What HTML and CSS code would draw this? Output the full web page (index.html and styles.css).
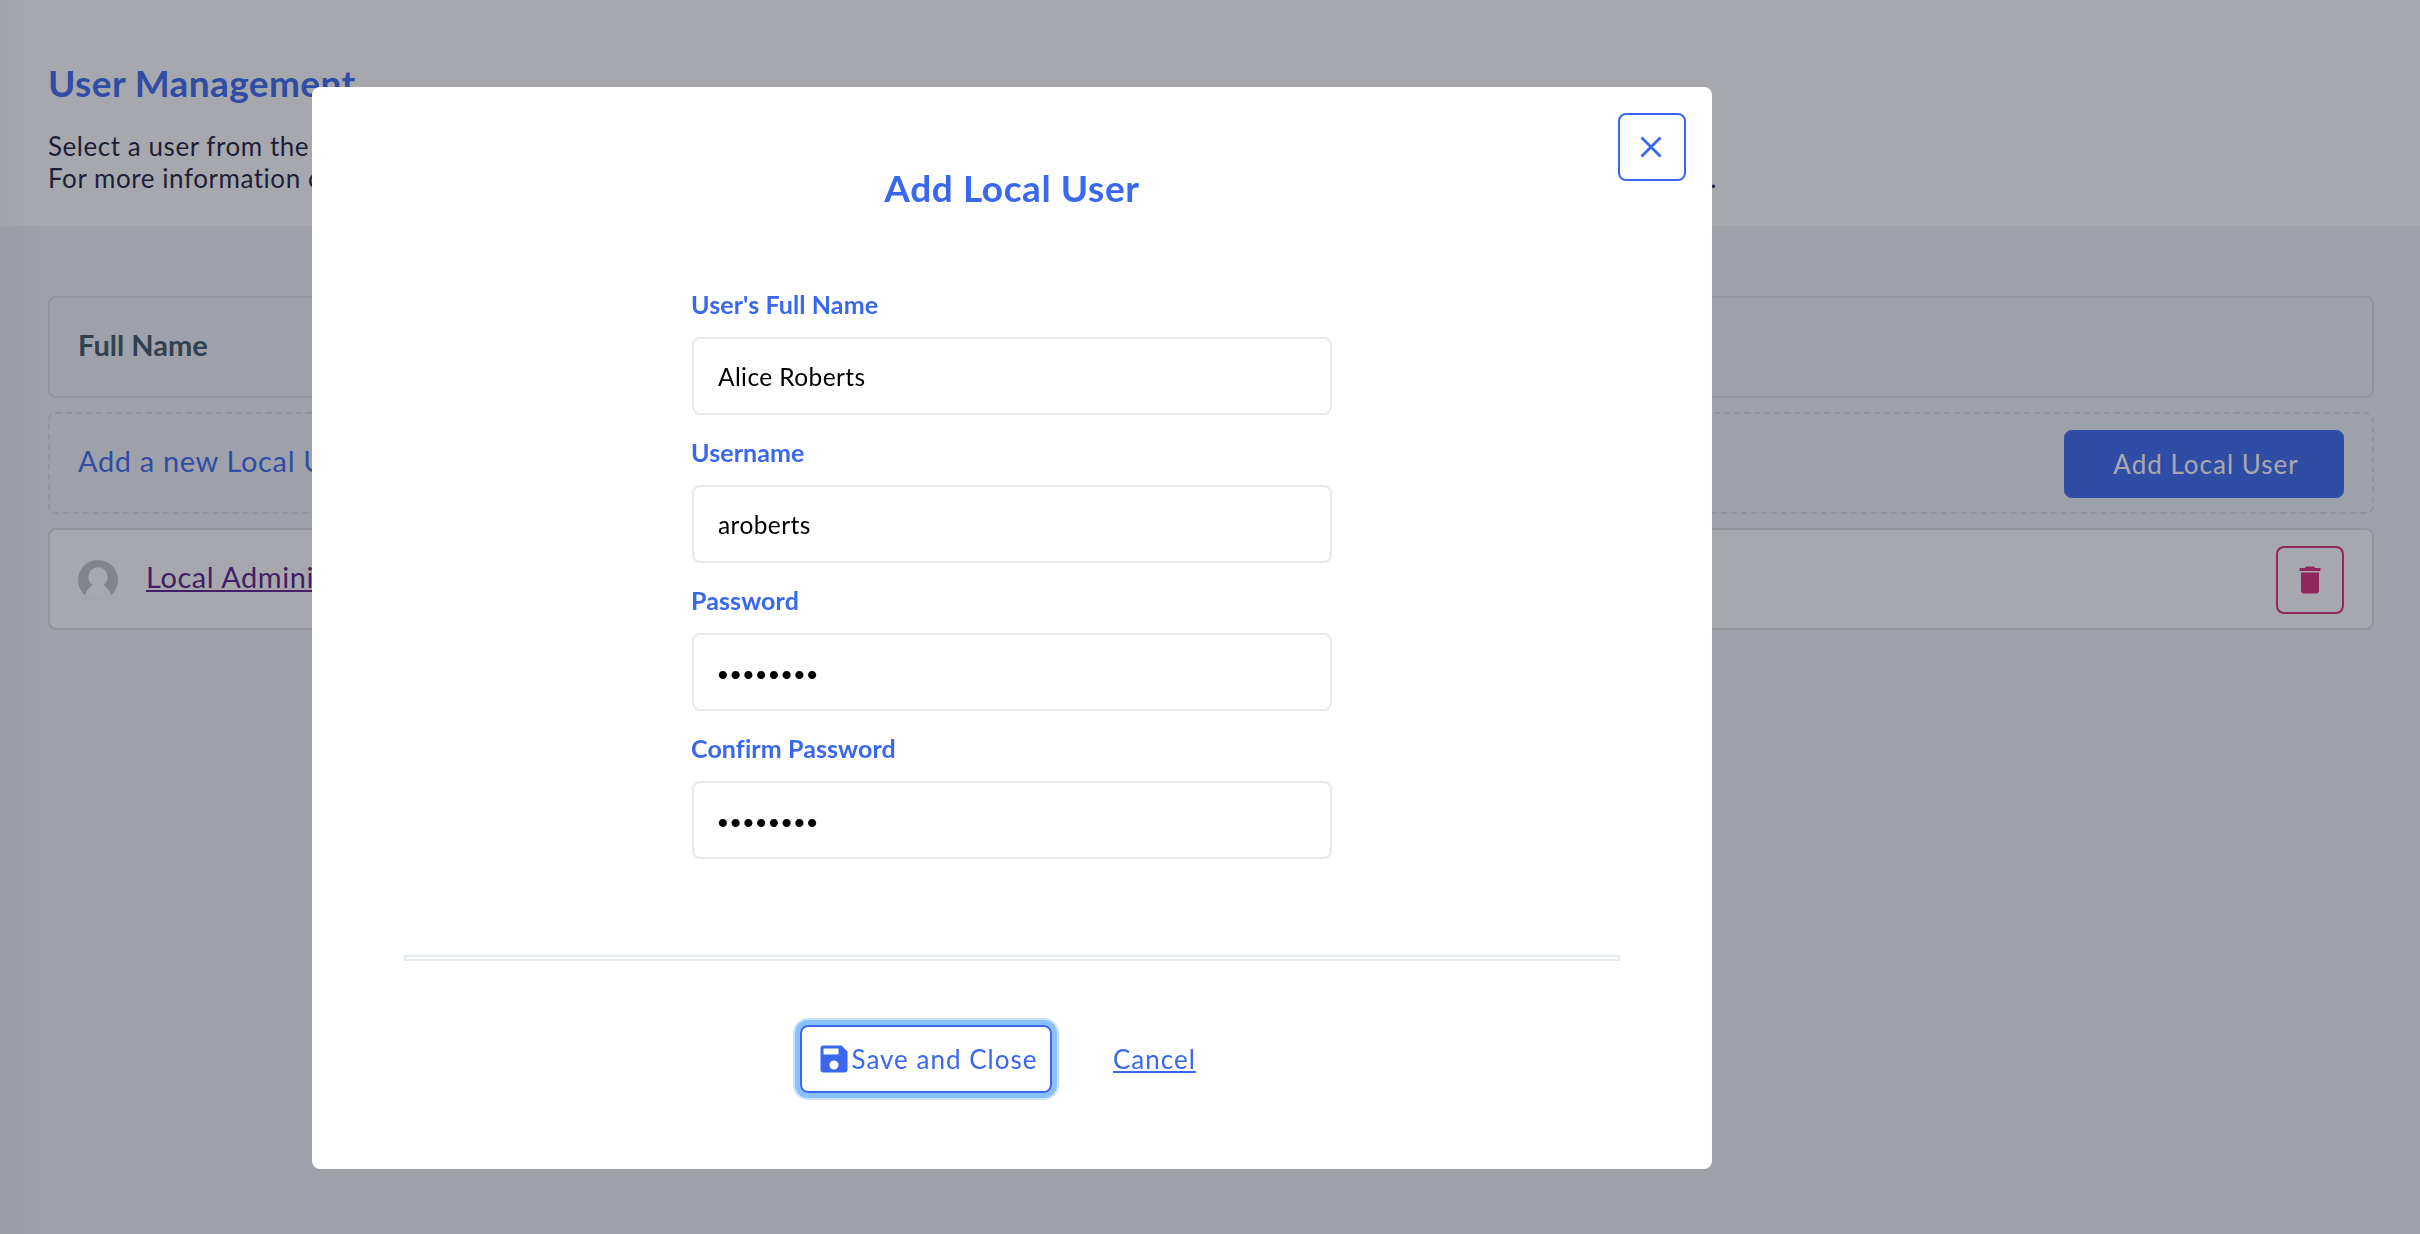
FILE: index.html
```html
<!DOCTYPE html>
<html lang="en">
<head>
<meta charset="utf-8">
<title>User Management</title>
<link rel="stylesheet" href="styles.css">
</head>
<body>
<main class="page">
  <header class="page-header">
    <h1 class="title">User Management</h1>
    <p class="intro">Select a user from the</p>
    <p class="intro intro-split"><span>For more information on</span><span>.</span></p>
  </header>
  <section class="users">
    <div class="row row-head"><span class="row-text">Full Name</span></div>
    <div class="row row-add">
      <span class="row-text">Add a new Local User</span>
      <button class="btn btn-primary">Add Local User</button>
    </div>
    <div class="row row-user">
      <svg class="avatar" viewBox="0 0 40 40"><defs><clipPath id="disc"><circle cx="20" cy="20" r="20"/></clipPath></defs><g clip-path="url(#disc)"><rect width="40" height="40" fill="#c4c4c6"/><circle cx="20" cy="17" r="9.700" fill="#fff"/><path d="M5 40C8 31 10 28 16 24h8c6 4 8 7 11 16z" fill="#fff"/></g></svg>
      <a class="row-text user-link" href="#">Local Administrator</a>
      <button class="btn btn-delete" aria-label="Delete"><svg width="36" height="36" viewBox="0 0 24 24"><path d="M19 4h-3.500l-1-1h-5l-1 1H5v2h14M6 19a2 2 0 0 0 2 2h8a2 2 0 0 0 2-2V7H6v12z" fill="currentColor"/></svg></button>
    </div>
  </section>
</main>
<div class="overlay">
  <div class="modal" role="dialog" aria-label="Add Local User">
    <button class="btn btn-close" aria-label="Close"><svg width="22" height="22" viewBox="0 0 22 22"><path d="M1.500 1.500l19 19M20.500 1.500l-19 19" stroke="currentColor" stroke-width="2.800"/></svg></button>
    <h2 class="title modal-title">Add Local User</h2>
    <form class="form">
      <div class="field">
        <label class="label" for="full-name">User's Full Name</label>
        <input class="input" id="full-name" type="text" value="Alice Roberts">
      </div>
      <div class="field">
        <label class="label" for="username">Username</label>
        <input class="input" id="username" type="text" value="aroberts">
      </div>
      <div class="field">
        <label class="label" for="password">Password</label>
        <input class="input input-secret" id="password" type="password" value="password">
      </div>
      <div class="field">
        <label class="label" for="confirm">Confirm Password</label>
        <input class="input input-secret" id="confirm" type="password" value="password">
      </div>
    </form>
    <div class="rule"></div>
    <div class="actions">
      <button class="btn btn-save"><svg width="36" height="36" viewBox="0 0 24 24"><path d="M15 9H5V5h10m-3 14a3 3 0 0 1-3-3 3 3 0 0 1 3-3 3 3 0 0 1 3 3 3 3 0 0 1-3 3m5-16H5a2 2 0 0 0-2 2v14a2 2 0 0 0 2 2h14a2 2 0 0 0 2-2V7l-4-4z" fill="currentColor"/></svg><span>Save and Close</span></button>
      <a class="cancel" href="#">Cancel</a>
    </div>
  </div>
</div>
</body>
</html>
```
FILE: styles.css
```css
* {
  box-sizing: border-box;
}

body {
  margin: 0;
  font-family: "Lato", "Noto Sans", sans-serif;
  font-size: 26px;
  line-height: 32px;
  letter-spacing: 0.55px;
  color: #1c1a3a;
  background: #f0f4f8;
}

/* Page behind the dialog */
.page {
  height: 1234px;
  overflow: hidden;
}

.page-header {
  height: 226px;
  padding: 59px 48px 0;
  background: #fff;
}

.title {
  margin: 0 0 23px;
  font-size: 37px;
  line-height: 48px;
  letter-spacing: 0.4px;
  color: #3967f0;
}

.intro {
  margin: 0;
}

.intro-split {
  display: flex;
  justify-content: space-between;
  width: 1669px;
}

.users {
  display: grid;
  gap: 14px;
  padding: 70px 46px 0 48px;
}

.row {
  display: flex;
  align-items: center;
  height: 102px;
  padding: 0 28px;
  border: 2px solid #dadee5;
  border-radius: 8px;
  font-size: 29px;
}

.row-text {
  padding-bottom: 4px;
}

.row-head {
  font-weight: 700;
  letter-spacing: 0;
  color: #3e5264;
}

.row-add {
  justify-content: space-between;
  border-style: dashed;
  letter-spacing: 0.65px;
  color: #3967f0;
}

.row-user {
  background: #fff;
}

.avatar {
  width: 40px;
  height: 40px;
  margin: 2px 28px 0 0;
}

.user-link {
  flex: 1;
  letter-spacing: 0.55px;
  color: #551a8b;
  text-decoration-thickness: 2px;
  text-underline-offset: 2px;
}

.btn {
  display: flex;
  align-items: center;
  justify-content: center;
  height: 68px;
  padding: 0;
  border: 2px solid;
  border-radius: 8px;
  background: transparent;
  font: inherit;
  font-size: 26px;
  letter-spacing: 1px;
}

.btn-primary {
  width: 280px;
  margin-top: 2px;
  padding-left: 4px;
  border-color: #3967f0;
  background: #3967f0;
  color: #fff;
}

.btn-delete {
  width: 68px;
  margin-top: 2px;
  color: #d92b7b;
}

/* Dialog */
.overlay {
  position: fixed;
  inset: 0;
  padding: 87px 0 0 312px;
  background:
    linear-gradient(to right, rgba(35, 37, 60, 0.04), transparent 44px),
    rgba(35, 37, 50, 0.4);
}

.modal {
  display: flex;
  flex-direction: column;
  width: 1400px;
  height: 1082px;
  border-radius: 8px;
  background: #fff;
}

.btn-close {
  align-self: flex-end;
  width: 68px;
  margin: 26px 26px 0 0;
  padding-right: 2px;
  color: #3967f0;
}

.modal-title {
  margin: -17px 0 76px;
  letter-spacing: 0.6px;
  text-align: center;
}

.form {
  display: grid;
  gap: 21px;
  width: 640px;
  margin: 0 auto;
}

.field {
  display: grid;
  gap: 17px;
}

.label {
  margin-left: -1px;
  padding-top: 1px;
  font-size: 25px;
  font-weight: 700;
  line-height: 31px;
  letter-spacing: 0.1px;
  color: #3967f0;
}

.input {
  width: 100%;
  height: 78px;
  padding: 0 24px;
  border: 2px solid #e5eaee;
  border-radius: 8px;
  background: #fff;
  font-family: inherit;
  font-size: 24.5px;
  letter-spacing: 0.4px;
  color: #000;
}

.input-secret {
  padding: 3px 22.5px 0;
  font-size: 22px;
  letter-spacing: 0;
}

.rule {
  height: 6px;
  margin: 96px 92px 64px;
  border: 2px solid #e5eaee;
}

.actions {
  display: flex;
  align-items: center;
  gap: 61px;
  padding-left: 488px;
}

.btn-save {
  width: 252px;
  justify-content: flex-start;
  padding-left: 13.5px;
  white-space: nowrap;
  color: #3967f0;
  box-shadow: 0 0 0 5px #8ac1ff, 0 0 0 7px #cde4fd;
}

.cancel {
  letter-spacing: 1px;
  color: #3967f0;
  text-decoration-thickness: 2px;
  text-underline-offset: 2px;
}
```
